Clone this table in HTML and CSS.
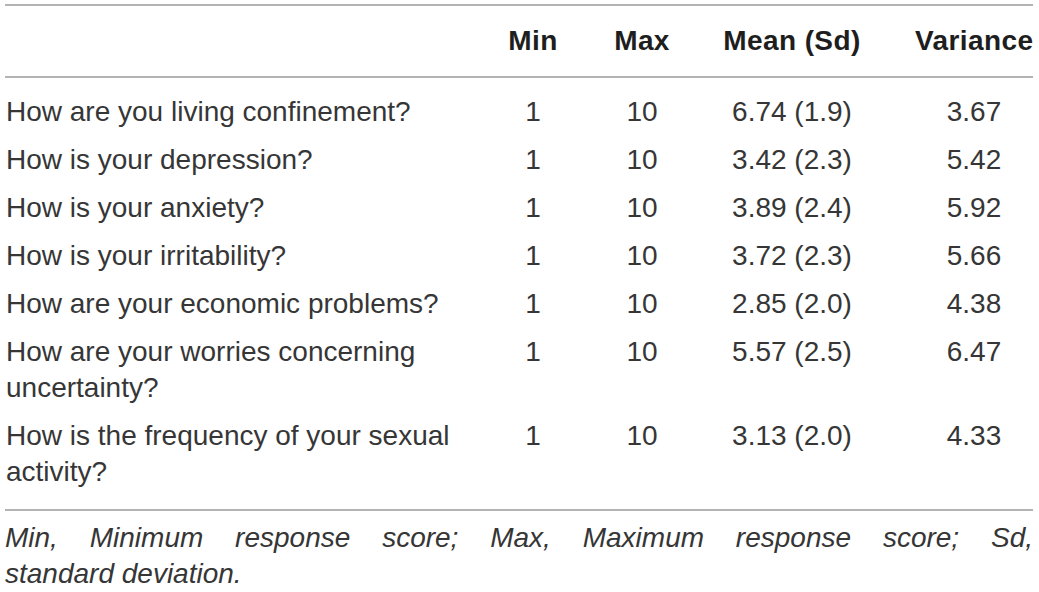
FILE: index.html
```html
<!DOCTYPE html>
<html lang="en">
<head>
<meta charset="utf-8">
<title>Table</title>
<link rel="stylesheet" href="styles.css">
</head>
<body>
<div class="table">
  <div class="row head">
    <div class="cell label"></div>
    <div class="cell num">Min</div>
    <div class="cell num">Max</div>
    <div class="cell num">Mean (Sd)</div>
    <div class="cell num var">Variance</div>
  </div>
  <div class="body">
    <div class="row">
      <div class="cell label">How are you living confinement?</div>
      <div class="cell num">1</div>
      <div class="cell num">10</div>
      <div class="cell num">6.74 (1.9)</div>
      <div class="cell num var">3.67</div>
    </div>
    <div class="row">
      <div class="cell label">How is your depression?</div>
      <div class="cell num">1</div>
      <div class="cell num">10</div>
      <div class="cell num">3.42 (2.3)</div>
      <div class="cell num var">5.42</div>
    </div>
    <div class="row">
      <div class="cell label">How is your anxiety?</div>
      <div class="cell num">1</div>
      <div class="cell num">10</div>
      <div class="cell num">3.89 (2.4)</div>
      <div class="cell num var">5.92</div>
    </div>
    <div class="row">
      <div class="cell label">How is your irritability?</div>
      <div class="cell num">1</div>
      <div class="cell num">10</div>
      <div class="cell num">3.72 (2.3)</div>
      <div class="cell num var">5.66</div>
    </div>
    <div class="row">
      <div class="cell label">How are your economic problems?</div>
      <div class="cell num">1</div>
      <div class="cell num">10</div>
      <div class="cell num">2.85 (2.0)</div>
      <div class="cell num var">4.38</div>
    </div>
    <div class="row">
      <div class="cell label">How are your worries concerning uncertainty?</div>
      <div class="cell num">1</div>
      <div class="cell num">10</div>
      <div class="cell num">5.57 (2.5)</div>
      <div class="cell num var">6.47</div>
    </div>
    <div class="row">
      <div class="cell label">How is the frequency of your sexual activity?</div>
      <div class="cell num">1</div>
      <div class="cell num">10</div>
      <div class="cell num">3.13 (2.0)</div>
      <div class="cell num var">4.33</div>
    </div>
  </div>
  <p class="foot"><span class="foot-line">Min, Minimum response score; Max, Maximum response score; Sd,</span><span class="foot-last">standard deviation.</span></p>
</div>
</body>
</html>
```

FILE: styles.css
```css
html, body {
  margin: 0;
  padding: 0;
  background: #ffffff;
}

body {
  font-family: "Liberation Sans", Arial, Helvetica, sans-serif;
  color: #363636;
  font-size: 28px;
}

.table {
  width: 1028px;
  padding: 4px 0 0 5px;
}

.row {
  display: grid;
  grid-template-columns: 475px 106px 112px 188px 147px;
  line-height: 36px;
}

.head {
  border-top: 2px solid #b3b3b3;
  border-bottom: 2px solid #b3b3b3;
  padding: 17px 0 17px;
  font-weight: bold;
  color: #1e1e1e;
  letter-spacing: 0.4px;
}

.body {
  padding: 10px 0 13px;
  border-bottom: 2px solid #b3b3b3;
}

.body .row {
  padding: 6px 0 6px;
}

.cell.label {
  padding-left: 1px;
}

.cell.num {
  text-align: center;
}

.cell.var {
  padding-left: 29px;
}

.foot {
  margin: 9px 0 0;
  font-style: italic;
  line-height: 36px;
}

.foot-line {
  display: block;
  text-align: justify;
  text-align-last: justify;
}

.foot-last {
  display: block;
}
```
